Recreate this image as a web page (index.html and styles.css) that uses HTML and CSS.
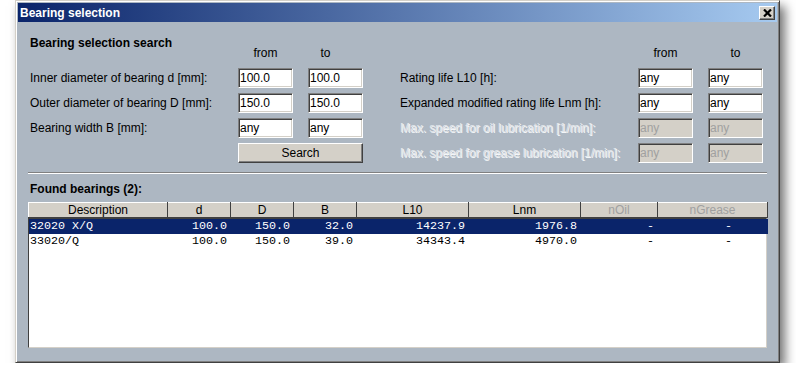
FILE: index.html
```html
<!DOCTYPE html>
<html lang="en">
<head>
    <meta charset="UTF-8">
    <title>Bearing selection</title>
    <link rel="stylesheet" href="styles.css">
</head>
<body>
    <div class="window">
        <div class="titlebar">
            <span class="title">Bearing selection</span>
            <button class="close-button">
                <svg width="9" height="8" viewBox="0 0 9 8">
                    <path d="M1 0.5 L8 7.5 M8 0.5 L1 7.5" stroke="#000" stroke-width="2.2" fill="none"/>
                </svg>
            </button>
        </div>

        <div class="panel">
            <div class="search-grid">
                <h2 class="heading">Bearing selection search</h2>
                <span class="col-head left-from">from</span>
                <span class="col-head left-to">to</span>
                <span class="col-head right-from">from</span>
                <span class="col-head right-to">to</span>

                <label class="field-label left-label">Inner diameter of bearing d [mm]:</label>
                <input class="field left-from" type="text" value="100.0">
                <input class="field left-to" type="text" value="100.0">
                <label class="field-label right-label">Rating life L10 [h]:</label>
                <input class="field right-from" type="text" value="any">
                <input class="field right-to" type="text" value="any">

                <label class="field-label left-label">Outer diameter of bearing D [mm]:</label>
                <input class="field left-from" type="text" value="150.0">
                <input class="field left-to" type="text" value="150.0">
                <label class="field-label right-label">Expanded modified rating life Lnm [h]:</label>
                <input class="field right-from" type="text" value="any">
                <input class="field right-to" type="text" value="any">

                <label class="field-label left-label">Bearing width B [mm]:</label>
                <input class="field left-from" type="text" value="any">
                <input class="field left-to" type="text" value="any">
                <label class="field-label right-label disabled">Max. speed for oil lubrication [1/min]:</label>
                <input class="field right-from" type="text" value="any" disabled>
                <input class="field right-to" type="text" value="any" disabled>

                <button class="search-button">Search</button>
                <label class="field-label right-label disabled">Max. speed for grease lubrication [1/min]:</label>
                <input class="field right-from" type="text" value="any" disabled>
                <input class="field right-to" type="text" value="any" disabled>
            </div>

            <div class="separator"></div>

            <h2 class="found">Found bearings (2):</h2>

            <div class="list">
                <table class="list-head">
                    <colgroup>
                        <col class="w-desc"><col class="w-num"><col class="w-num"><col class="w-num">
                        <col class="w-life"><col class="w-life"><col class="w-oil"><col class="w-grease">
                    </colgroup>
                    <tr>
                        <th>Description</th>
                        <th>d</th>
                        <th>D</th>
                        <th>B</th>
                        <th>L10</th>
                        <th>Lnm</th>
                        <th class="dim">nOil</th>
                        <th class="dim">nGrease</th>
                    </tr>
                </table>
                <div class="list-body">
                    <table class="list-rows">
                        <colgroup>
                            <col class="w-desc"><col class="w-num"><col class="w-num"><col class="w-num">
                            <col class="w-life"><col class="w-life"><col class="w-oil"><col class="w-grease">
                        </colgroup>
                        <tr class="selected">
                            <td class="desc">32020 X/Q</td>
                            <td>100.0</td>
                            <td>150.0</td>
                            <td>32.0</td>
                            <td>14237.9</td>
                            <td>1976.8</td>
                            <td>-</td>
                            <td class="grease">-</td>
                        </tr>
                        <tr>
                            <td class="desc">33020/Q</td>
                            <td>100.0</td>
                            <td>150.0</td>
                            <td>39.0</td>
                            <td>34343.4</td>
                            <td>4970.0</td>
                            <td>-</td>
                            <td class="grease">-</td>
                        </tr>
                    </table>
                </div>
            </div>
        </div>
    </div>
</body>
</html>
```

FILE: styles.css
```css
:root {
    --panel-color: #adb7c2;
    --face-color: #d4d0c8;
    --shadow-color: #808080;
    --dark-color: #404040;
    --select-color: #0a246a;
}

body {
    margin: 0;
    background: #ffffff;
    font-family: 'Liberation Sans', Arial, sans-serif;
    font-size: 12px;
    color: #000;
}

.window {
    margin-left: 15px;
    width: 765px;
    height: 363px;
    box-sizing: border-box;
    padding: 2px;
    display: flex;
    flex-direction: column;
    background: var(--panel-color);
    border: 1px solid;
    border-color: var(--face-color) var(--dark-color) var(--dark-color) var(--face-color);
    box-shadow: inset 1px 1px 0 #fff, inset -1px -1px 0 var(--shadow-color), 5px 6px 10px rgba(0,0,0,0.55);
}

.titlebar {
    height: 19px;
    display: flex;
    align-items: center;
    justify-content: space-between;
    padding: 0 2px 0 2px;
    background: linear-gradient(90deg, var(--select-color), #a6caf0);
}

.title {
    color: #fff;
    font-weight: bold;
    font-size: 12px;
}

.close-button {
    width: 16px;
    height: 14px;
    padding: 0;
    display: flex;
    align-items: center;
    justify-content: center;
    background: var(--face-color);
    border: 1px solid;
    border-color: #fff var(--dark-color) var(--dark-color) #fff;
    box-shadow: inset -1px -1px 0 var(--shadow-color);
}

.panel {
    flex: 1;
    display: flex;
    flex-direction: column;
    padding: 14px 10px 12px 10px;
}

.search-grid {
    margin-left: 2px;
    display: grid;
    grid-template-columns: 208px 55px 15px 55px 37px 238px 55px 15px 55px;
    grid-template-rows: 27px 20px 20px 20px 20px;
    row-gap: 5px;
}

.heading {
    grid-column: 1 / 3;
    grid-row: 1;
    align-self: start;
    margin: 0;
    font-size: 12px;
    line-height: 14px;
    font-weight: bold;
}

.col-head {
    grid-row: 1;
    align-self: end;
    justify-self: center;
    line-height: 14px;
    margin-bottom: 3px;
}

.left-label { grid-column: 1; }
.left-from { grid-column: 2; }
.left-to { grid-column: 4; }
.right-label { grid-column: 6; }
.right-from { grid-column: 7; }
.right-to { grid-column: 9; }

.col-head.left-to {
    margin-right: 20px;
}

.field-label {
    align-self: center;
    line-height: 20px;
    white-space: nowrap;
}

.field-label.disabled {
    color: #e2e6ea;
    text-shadow: 1px 1px 0 #f4f6f8;
}

.field {
    width: 55px;
    height: 20px;
    box-sizing: border-box;
    margin: 0;
    padding: 0 0 0 1px;
    font-family: 'Liberation Sans', Arial, sans-serif;
    font-size: 12px;
    color: #000;
    background: #fff;
    border: 1px solid;
    border-color: var(--shadow-color) #fff #fff var(--shadow-color);
    box-shadow: inset 1px 1px 0 var(--dark-color), inset -1px -1px 0 var(--face-color);
    outline: none;
}

.field:disabled {
    background: var(--face-color);
    color: #a0a0a0;
}

.search-button {
    grid-column: 2 / 5;
    margin: 0;
    height: 20px;
    font-family: 'Liberation Sans', Arial, sans-serif;
    font-size: 12px;
    color: #000;
    background: var(--face-color);
    border: 1px solid;
    border-color: #fff var(--dark-color) var(--dark-color) #fff;
    box-shadow: inset -1px -1px 0 var(--shadow-color);
}

.separator {
    margin-top: 9px;
    height: 1px;
    border-top: 1px solid var(--shadow-color);
    border-bottom: 1px solid #fff;
    box-sizing: content-box;
    height: 0;
}

.found {
    margin: 8px 0 6px 2px;
    font-size: 12px;
    line-height: 14px;
    font-weight: bold;
}

.list {
    flex: 1;
    display: flex;
    flex-direction: column;
}

table {
    width: 739px;
    table-layout: fixed;
    border-collapse: collapse;
    border-spacing: 0;
}

.w-desc { width: 139px; }
.w-num { width: 63px; }
.w-life { width: 112px; }
.w-oil { width: 77px; }
.w-grease { width: 110px; }

.list-head th {
    height: 15px;
    padding: 0;
    box-sizing: border-box;
    font-weight: normal;
    font-size: 12px;
    line-height: 13px;
    text-align: center;
    background: var(--face-color);
    border-top: 1px solid #fff;
    border-left: 1px solid #fff;
    border-right: 1px solid var(--dark-color);
    border-bottom: 1px solid var(--dark-color);
}

.list-head th.dim {
    color: #a0a0a0;
}

.list-body {
    flex: 1;
    background: #fff;
    border: 1px solid;
    border-color: var(--dark-color) var(--face-color) var(--face-color) var(--dark-color);
}

.list-rows {
    width: 737px;
}

.list-rows td {
    height: 15px;
    padding: 0 4px 0 0;
    font-family: 'Liberation Mono', 'Courier New', monospace;
    font-size: 11.7px;
    line-height: 15px;
    text-align: right;
    white-space: pre;
}

.list-rows td.desc {
    text-align: left;
    padding-left: 1px;
}

.list-rows td.grease {
    padding-right: 36px;
}

.list-rows tr.selected td {
    background: var(--select-color);
    color: #fff;
}
```
